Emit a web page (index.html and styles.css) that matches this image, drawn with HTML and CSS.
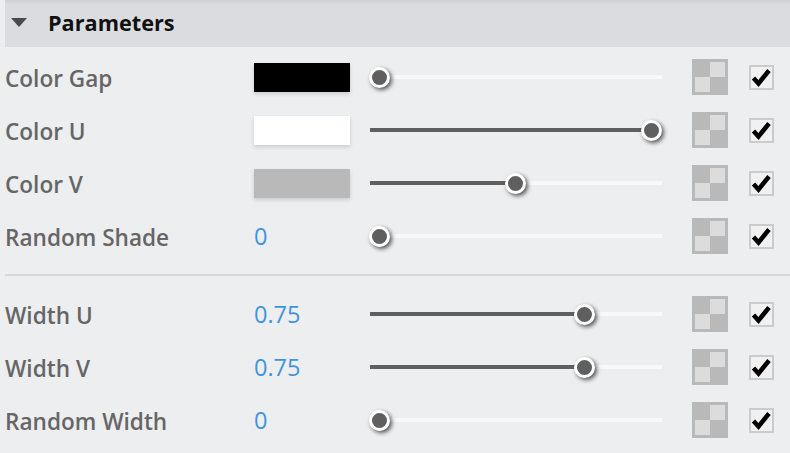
FILE: index.html
```html
<!DOCTYPE html>
<html lang="en">
<head>
    <meta charset="UTF-8">
    <title>Parameters</title>
    <link rel="stylesheet" href="styles.css">
</head>
<body>

<div class="panel-header">
    <span class="arrow"></span>
    <span class="panel-title">Parameters</span>
</div>

<div class="group group-first">
    <div class="row">
        <div class="label">Color Gap</div>
        <div class="value"><div class="swatch swatch-black"></div></div>
        <div class="slider"><div class="fill" style="width:3.4%"></div><div class="knob" style="left:3.4%"></div></div>
        <div class="checker"><span></span><span></span></div>
        <div class="check"><svg viewBox="0 0 25 25" width="25" height="25"><path d="M4.500 13l5 5.500 10.500-13" class="tick"/></svg></div>
    </div>
    <div class="row">
        <div class="label">Color U</div>
        <div class="value"><div class="swatch swatch-white"></div></div>
        <div class="slider"><div class="fill" style="width:96.6%"></div><div class="knob" style="left:96.6%"></div></div>
        <div class="checker"><span></span><span></span></div>
        <div class="check"><svg viewBox="0 0 25 25" width="25" height="25"><path d="M4.500 13l5 5.500 10.500-13" class="tick"/></svg></div>
    </div>
    <div class="row">
        <div class="label">Color V</div>
        <div class="value"><div class="swatch swatch-grey"></div></div>
        <div class="slider"><div class="fill" style="width:50%"></div><div class="knob" style="left:50%"></div></div>
        <div class="checker"><span></span><span></span></div>
        <div class="check"><svg viewBox="0 0 25 25" width="25" height="25"><path d="M4.500 13l5 5.500 10.500-13" class="tick"/></svg></div>
    </div>
    <div class="row">
        <div class="label">Random Shade</div>
        <div class="value">0</div>
        <div class="slider"><div class="fill" style="width:3.4%"></div><div class="knob" style="left:3.4%"></div></div>
        <div class="checker"><span></span><span></span></div>
        <div class="check"><svg viewBox="0 0 25 25" width="25" height="25"><path d="M4.500 13l5 5.500 10.500-13" class="tick"/></svg></div>
    </div>
</div>

<div class="divider"></div>

<div class="group">
    <div class="row">
        <div class="label">Width U</div>
        <div class="value">0.75</div>
        <div class="slider"><div class="fill" style="width:73.6%"></div><div class="knob" style="left:73.6%"></div></div>
        <div class="checker"><span></span><span></span></div>
        <div class="check"><svg viewBox="0 0 25 25" width="25" height="25"><path d="M4.500 13l5 5.500 10.500-13" class="tick"/></svg></div>
    </div>
    <div class="row">
        <div class="label">Width V</div>
        <div class="value">0.75</div>
        <div class="slider"><div class="fill" style="width:73.6%"></div><div class="knob" style="left:73.6%"></div></div>
        <div class="checker"><span></span><span></span></div>
        <div class="check"><svg viewBox="0 0 25 25" width="25" height="25"><path d="M4.500 13l5 5.500 10.500-13" class="tick"/></svg></div>
    </div>
    <div class="row">
        <div class="label">Random Width</div>
        <div class="value">0</div>
        <div class="slider"><div class="fill" style="width:3.4%"></div><div class="knob" style="left:3.4%"></div></div>
        <div class="checker"><span></span><span></span></div>
        <div class="check"><svg viewBox="0 0 25 25" width="25" height="25"><path d="M4.500 13l5 5.500 10.500-13" class="tick"/></svg></div>
    </div>
</div>

</body>
</html>
```

FILE: styles.css
```css
html, body {
    height: 100%;
    overflow: hidden;
}

body {
    margin: 0;
    background-color: #edeef0;
    font-family: "Open Sans", "Noto Sans", sans-serif;
    color: #5f5f5f;
}

.panel-header {
    display: flex;
    align-items: center;
    height: 47px;
    margin-left: 5px;
    background: linear-gradient(#cfd0d3, #dbdcdf 5px);
}

.arrow {
    width: 0;
    height: 0;
    margin-left: 6px;
    margin-top: -2px;
    border-left: 8px solid transparent;
    border-right: 8px solid transparent;
    border-top: 9px solid #4a4a4a;
}

.panel-title {
    margin-left: 21px;
    margin-top: -2px;
    font-size: 21.7px;
    font-weight: 700;
    color: #111;
}

.group {
    padding-left: 5px;
}

.group-first {
    padding-top: 4px;
}

.row {
    display: flex;
    align-items: center;
    box-sizing: border-box;
    height: 53px;
    padding-bottom: 1px;
}

.label {
    width: 249px;
    margin-top: 3px;
    font-size: 22.6px;
    font-weight: 600;
    color: #666;
}

.value {
    width: 116px;
    margin-top: -1px;
    font-size: 23.5px;
    color: #3f94de;
}

.swatch {
    width: 96px;
    height: 29px;
    margin-top: 2px;
    box-shadow: 0 2px 4px rgba(0,0,0,0.15);
}

.swatch-black {
    background-color: #000;
}

.swatch-white {
    background-color: #fff;
}

.swatch-grey {
    background-color: #b9b9b9;
}

.slider {
    position: relative;
    width: 292px;
    height: 4px;
    background-color: #f8f8f9;
}

.fill {
    height: 100%;
    background-color: #5f5f5f;
}

.knob {
    position: absolute;
    top: 50%;
    width: 21px;
    height: 21px;
    box-sizing: border-box;
    margin: -10px 0 0 -11px;
    border: 3px solid #fff;
    border-radius: 50%;
    background-color: #5f5f5f;
    box-shadow: 2px 2px 4px rgba(0,0,0,0.65);
}

.checker {
    display: grid;
    grid-template-columns: 15px 15px;
    grid-template-rows: 15px 15px;
    width: 36px;
    height: 36px;
    box-sizing: border-box;
    padding: 3px;
    margin-left: 30px;
    background-color: #b9b9b9;
}

.checker span {
    background-color: #dcdcdd;
}

.checker span:first-child {
    grid-column: 2;
    grid-row: 1;
}

.checker span:last-child {
    grid-column: 1;
    grid-row: 2;
}

.check {
    width: 25px;
    height: 25px;
    box-sizing: border-box;
    margin-top: 1px;
    margin-left: 21px;
    border: 2px solid #cbcbcb;
    background-color: #f1f1f2;
}

.check svg {
    display: block;
    margin: -2px;
}

.tick {
    fill: none;
    stroke: #000;
    stroke-width: 4.5;
}

.divider {
    height: 2px;
    margin: 11px 0 12px 5px;
    background-color: #d8d8da;
}
```
